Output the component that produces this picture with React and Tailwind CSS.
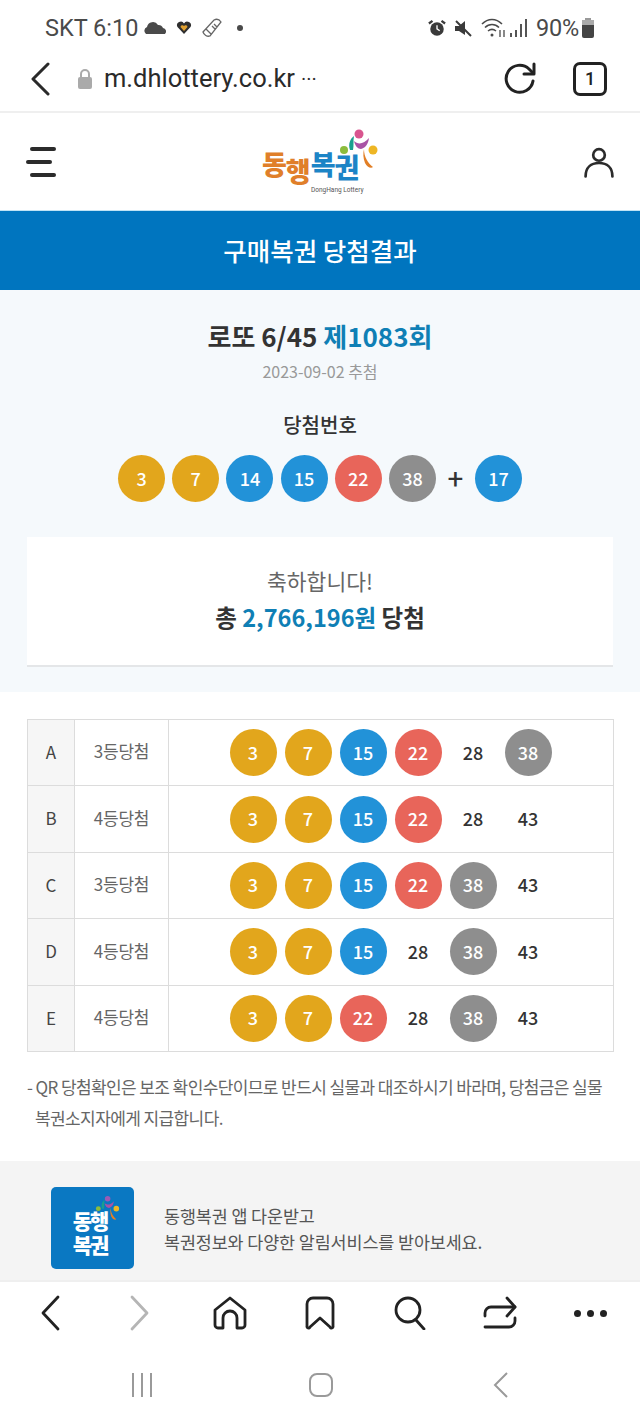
import React from 'react';

const YELLOW = 'bg-[#e2a61c]';
const BLUE = 'bg-[#2292d8]';
const RED = 'bg-[#e8655a]';
const GRAY = 'bg-[#8e8e8e]';

const ballColor = (n) => {
  if (n <= 10) return YELLOW;
  if (n <= 20) return BLUE;
  if (n <= 30) return RED;
  return GRAY;
};

const Ball = ({ n, on = true }) => (
  <span
    className={`flex h-[47px] w-[47px] shrink-0 items-center justify-center rounded-full pb-[1px] text-[18px] font-medium ${
      on ? `${ballColor(n)} text-white` : 'text-[#333]'
    }`}
  >
    {n}
  </span>
);

const rows = [
  { id: 'A', rank: '3등당첨', nums: [[3, 1], [7, 1], [15, 1], [22, 1], [28, 0], [38, 1]] },
  { id: 'B', rank: '4등당첨', nums: [[3, 1], [7, 1], [15, 1], [22, 1], [28, 0], [43, 0]] },
  { id: 'C', rank: '3등당첨', nums: [[3, 1], [7, 1], [15, 1], [22, 1], [38, 1], [43, 0]] },
  { id: 'D', rank: '4등당첨', nums: [[3, 1], [7, 1], [15, 1], [28, 0], [38, 1], [43, 0]] },
  { id: 'E', rank: '4등당첨', nums: [[3, 1], [7, 1], [22, 1], [28, 0], [38, 1], [43, 0]] },
];

const StatusBar = () => (
  <div className="flex h-[44px] items-end justify-between pl-[45px] pr-[45px] font-['Roboto',sans-serif] text-[23.500px] leading-[32px] text-[#4a4a4a]">
    <div className="flex items-center">
      <span>SKT 6:10</span>
      <svg width="24" height="18" viewBox="0 0 24 18" className="ml-[6px]">
        <path d="M2 15a4 4 0 0 1 1-7 6 6 0 0 1 11-2 5 5 0 0 1 5 3 3.500 3.500 0 0 1 2 6z" fill="#4a4a4a" />
      </svg>
      <svg width="16" height="16" viewBox="0 0 16 16" className="ml-[8px]">
        <path d="M8 14 1.500 7A3.500 3.500 0 0 1 8 3.500 3.500 3.500 0 0 1 14.500 7z" fill="#2f2f2f" />
        <path d="M8 11 4.500 7A2 2 0 0 1 8 6a2 2 0 0 1 3.500 1z" fill="#e0a030" />
      </svg>
      <svg width="22" height="22" viewBox="0 0 22 22" className="ml-[9px]" fill="none" stroke="#666" strokeWidth="1.300">
        <path d="M2 15 13 3c2-1 5-1 7 2L9 19c-3 1-6-1-7-4zM5 12l5 5M13 7l3 3M11 9l3 3" />
      </svg>
      <span className="ml-[14px] h-[6px] w-[6px] rounded-full bg-[#4a4a4a]" />
    </div>
    <div className="flex items-center">
      <svg width="18" height="20" viewBox="0 0 20 20">
        <circle cx="10" cy="11" r="7.500" fill="#3a3a3a" />
        <path d="M1 5l4-3M19 5l-4-3" stroke="#3a3a3a" strokeWidth="2.500" />
        <path d="M10 7v4l3 2" stroke="#fff" strokeWidth="1.500" fill="none" />
      </svg>
      <svg width="20" height="20" viewBox="0 0 20 20" className="ml-[7px]">
        <path d="M2 8h4l6-5v14l-6-4H2z" fill="#3a3a3a" />
        <path d="M3 3l15 15" stroke="#3a3a3a" strokeWidth="2" />
      </svg>
      <svg width="26" height="22" viewBox="0 0 26 22" className="ml-[8px]" fill="none" stroke="#4a4a4a" strokeWidth="1.600">
        <path d="M1 7c6-6 14-6 20 0M4 10.500c4-4 10-4 14 0M7 14c2.500-2 5.500-2 8 0" />
        <circle cx="11" cy="18" r="1.500" fill="#4a4a4a" stroke="none" />
        <path d="M19 13v7M23 13v7" strokeWidth="1.300" />
      </svg>
      <div className="ml-[3px] flex items-end gap-[3px]">
        <span className="h-[4px] w-[2px] bg-[#555]" />
        <span className="h-[7px] w-[2px] bg-[#555]" />
        <span className="h-[13px] w-[2px] bg-[#555]" />
        <span className="h-[18px] w-[2px] bg-[#555]" />
      </div>
      <span className="ml-[9px] tracking-[-0.2px]">90%</span>
      <svg width="14" height="20" viewBox="0 0 14 20" className="ml-[2px]">
        <path d="M4 0h6v2H4z" fill="#999" />
        <rect x="1" y="2" width="12" height="5" fill="#aaa" />
        <path d="M1 7h12v11a2 2 0 0 1-2 2H3a2 2 0 0 1-2-2z" fill="#444" />
      </svg>
    </div>
  </div>
);

const BrowserBar = () => (
  <div className="flex h-[69px] items-center border-b-2 border-[#efefef] pl-[30px] pr-[33px] pt-[2px]">
    <svg width="20" height="34" viewBox="0 0 20 34" fill="none" stroke="#2a2a2a" strokeWidth="3" strokeLinecap="round" strokeLinejoin="round">
      <path d="M18 2 3 17l15 15" />
    </svg>
    <svg width="16" height="22" viewBox="0 0 16 22" className="ml-[27px]">
      <path d="M4 9V6a4 4 0 0 1 8 0v3" fill="none" stroke="#aaa" strokeWidth="2" />
      <rect x="1" y="9" width="14" height="12" rx="2" fill="#aaa" />
    </svg>
    <span className="ml-[11px] font-['Roboto',sans-serif] text-[25.500px] leading-none text-[#2a2a2a]">m.dhlottery.co.kr</span>
    <span className="ml-[6px] font-['Roboto',sans-serif] text-[20px] leading-none text-[#2a2a2a]">···</span>
    <svg width="34" height="34" viewBox="0 0 34 34" className="ml-auto" fill="none" stroke="#222" strokeWidth="3" strokeLinecap="round" strokeLinejoin="round">
      <path d="M29 19a13.500 13.500 0 1 1-4-12l4 4" />
      <path d="M30 2v10H20" />
    </svg>
    <div className="ml-[35px] flex h-[34px] w-[34px] items-center justify-center rounded-[7px] border-[3px] border-[#222] font-['Roboto',sans-serif] text-[18px] font-medium text-[#222]">
      1
    </div>
  </div>
);

const LogoMark = ({ mono }) => (
  <svg width="44" height="46" viewBox="0 0 44 46">
    <circle cx="22" cy="6" r="4.500" fill={mono ? '#9a5bb5' : '#d8558f'} />
    <path d="M13 22c-2-6 0-11 4-14-1 5 0 9-1 14z" fill="#1aa08e" />
    <path d="M17 13c4 4 10 3 15-3-1 7-4 10-8 11-3 0-6-3-7-8z" fill="#a953a5" />
    <circle cx="7" cy="22" r="4" fill="#8cbc3c" />
    <circle cx="36" cy="22" r="4.500" fill="#eeb624" />
    <path d="M27 21c0 8 4 14 9 18-2 2-6 0-8-4-2-5-2-10-1-14z" fill="#e27f26" />
  </svg>
);

const Header = () => (
  <div className="flex h-[97px] items-center justify-between pl-[26px] pr-[24px]">
    <div className="flex flex-col gap-[9px]">
      <span className="ml-[4px] h-[4px] w-[26px] rounded-full bg-[#2b2b2b]" />
      <span className="h-[4px] w-[26px] rounded-full bg-[#2b2b2b]" />
      <span className="ml-[4px] h-[4px] w-[26px] rounded-full bg-[#2b2b2b]" />
    </div>
    <div className="relative h-[66px] w-[120px]">
      <div className="absolute left-[3px] top-[23px] flex font-['Noto_Sans_CJK_KR',sans-serif] text-[27px] font-black leading-[24px] tracking-[-1px]">
        <span className="text-[#e07f2a]">동</span>
        <span className="relative top-[7px] text-[#e07f2a]">행</span>
        <span className="ml-[1px] text-[#1c84c6]">복</span>
        <span className="relative top-[3px] text-[#1c84c6]">권</span>
      </div>
      <span className="absolute left-[52px] top-[57px] font-['Roboto',sans-serif] text-[6.500px] leading-[8px] text-[#555]">DongHang Lottery</span>
      <div className="absolute left-[78px] top-[-1px]">
        <LogoMark />
      </div>
    </div>
    <svg width="34" height="34" viewBox="0 0 34 38" fill="none" stroke="#2b2b2b" strokeWidth="3" strokeLinecap="round" className="mt-[2px]">
      <circle cx="17" cy="10" r="6.500" />
      <path d="M2 34c0-10 6-15 15-15s15 5 15 15" />
    </svg>
  </div>
);

const BottomNav = () => (
  <div className="h-[142px] border-t-2 border-[#efefef] bg-white">
    <div className="ml-[5px] grid h-[62px] w-[630px] grid-cols-7 place-items-center">
      <svg width="20" height="36" viewBox="0 0 20 36" fill="none" stroke="#222" strokeWidth="2.800" strokeLinecap="round" strokeLinejoin="round">
        <path d="M18 2 3 18l15 16" />
      </svg>
      <svg width="20" height="36" viewBox="0 0 20 36" fill="none" stroke="#b5b5b5" strokeWidth="2.800" strokeLinecap="round" strokeLinejoin="round">
        <path d="M2 2l15 16L2 34" />
      </svg>
      <svg width="34" height="34" viewBox="0 0 34 34" fill="none" stroke="#222" strokeWidth="2.800" strokeLinejoin="round">
        <path d="M2 14 17 2l15 12v15a3 3 0 0 1-3 3h-5V22a7 7 0 0 0-14 0v10H5a3 3 0 0 1-3-3z" />
      </svg>
      <svg width="30" height="34" viewBox="0 0 30 34" fill="none" stroke="#222" strokeWidth="2.800" strokeLinejoin="round">
        <path d="M2 8a6 6 0 0 1 6-6h14a6 6 0 0 1 6 6v22a1.500 1.500 0 0 1-3 1l-10-9-10 9a1.500 1.500 0 0 1-3-1z" />
      </svg>
      <svg width="32" height="34" viewBox="0 0 32 34" fill="none" stroke="#222" strokeWidth="2.800" strokeLinecap="round">
        <circle cx="14" cy="14" r="12" />
        <path d="M22 24l8 9" />
      </svg>
      <svg width="34" height="34" viewBox="0 0 34 34" fill="none" stroke="#222" strokeWidth="2.800" strokeLinecap="round" strokeLinejoin="round">
        <path d="M2 20v-3a6 6 0 0 1 6-6h24" />
        <path d="M24 2l8 9-8 9" />
        <path d="M32 22v3a6 6 0 0 1-6 6H2" />
      </svg>
      <div className="flex gap-[6px]">
        <span className="h-[7px] w-[7px] rounded-full bg-[#222]" />
        <span className="h-[7px] w-[7px] rounded-full bg-[#222]" />
        <span className="h-[7px] w-[7px] rounded-full bg-[#222]" />
      </div>
    </div>
    <div className="mt-[22px] flex h-[38px] items-center pl-[132px]">
      <div className="flex gap-[7px]">
        <span className="h-[24px] w-[2px] bg-[#9a9a9a]" />
        <span className="h-[24px] w-[2px] bg-[#9a9a9a]" />
        <span className="h-[24px] w-[2px] bg-[#9a9a9a]" />
      </div>
      <span className="ml-[157px] h-[24px] w-[24px] rounded-[8px] border-2 border-[#9a9a9a]" />
      <svg width="16" height="28" viewBox="0 0 16 28" fill="none" stroke="#9a9a9a" strokeWidth="2" className="ml-[160px]">
        <path d="M14 2 2 14l12 12" />
      </svg>
    </div>
  </div>
);

export default function App() {
  return (
    <div className="flex h-[1422px] w-[640px] flex-col overflow-hidden bg-white font-['Noto_Sans_CJK_KR',sans-serif]">
      <StatusBar />
      <BrowserBar />
      <div className="min-h-0 flex-1 overflow-hidden">
        <Header />
        <div className="flex h-[80px] items-center justify-center border-t border-[#bfe3f5] bg-[#0075bf] text-[25.500px] font-medium text-white">
          구매복권 당첨결과
        </div>

        {/* Draw summary */}
        <div className="h-[402px] bg-[#f5f9fc] px-[27px] pt-[27px]">
          <div className="text-center text-[26px] font-bold leading-[38px] text-[#333]">
            로또 6/45 <span className="text-[#0f7fb5]">제1083회</span>
          </div>
          <div className="mt-[4px] text-center text-[16px] leading-[24px] text-[#999]">2023-09-02 추첨</div>
          <div className="mt-[27px] text-center text-[20px] font-medium leading-[30px] text-[#333]">당첨번호</div>
          <div className="mt-[15px] flex items-center justify-center">
            <div className="flex gap-[7.200px]">
              {[3, 7, 14, 15, 22, 38].map((n) => (
                <Ball key={n} n={n} />
              ))}
            </div>
            <span className="mx-[9.500px] w-[20px] text-center font-['Roboto',sans-serif] text-[28px] leading-none text-[#333]">+</span>
            <Ball n={17} />
          </div>
          <div className="mt-[35px] flex h-[130px] flex-col items-center justify-center border-b-2 border-[#e4e6e8] bg-white pb-[4px]">
            <div className="text-[21.500px] leading-[36px] text-[#666]">축하합니다!</div>
            <div className="text-[23.500px] font-bold leading-[36px] text-[#333]">
              총 <span className="text-[#0f7fb5]">2,766,196원</span> 당첨
            </div>
          </div>
        </div>

        {/* Purchased games */}
        <div className="pl-[27px] pr-[26px] pt-[27px]">
          <div className="border-l border-t border-[#dcdcdc]">
            {rows.map((row) => (
              <div key={row.id} className="flex h-[66.400px] border-b border-r border-[#dcdcdc]">
                <div className="flex w-[47px] items-center justify-center border-r border-[#dcdcdc] bg-[#f6f6f6] pb-[2px] text-[17px] text-[#444]">{row.id}</div>
                <div className="flex w-[94px] items-center justify-center border-r border-[#dcdcdc] pb-[3px] text-[17px] tracking-[-0.2px] text-[#666]">{row.rank}</div>
                <div className="flex flex-1 items-center justify-center gap-[8px] pr-[1px]">
                  {row.nums.map(([n, on]) => (
                    <Ball key={n} n={n} on={!!on} />
                  ))}
                </div>
              </div>
            ))}
          </div>
          <p className="mt-[19px] pl-[8px] -indent-[8px] text-[17px] leading-[31px] tracking-[-0.6px] whitespace-nowrap text-[#666]">
            - QR 당첨확인은 보조 확인수단이므로 반드시 실물과 대조하시기 바라며, 당첨금은 실물<br />
            복권소지자에게 지급합니다.
          </p>
        </div>

        {/* App banner */}
        <div className="mt-[28px] flex h-[140px] items-start bg-[#f4f4f4] pl-[51px] pt-[26px]">
          <div className="relative h-[82px] w-[83px] rounded-[5px] bg-[#0a78c2]">
            <div className="absolute left-[17px] top-[21px] w-[44px] text-center text-[21px] font-black leading-[24px] tracking-[-2px] text-white">
              동행<br />복권
            </div>
            <div className="absolute left-[43px] top-[8px] scale-[0.62] origin-top-left">
              <LogoMark mono />
            </div>
          </div>
          <div className="ml-[30px] mt-[16px] text-[17.400px] leading-[26px] tracking-[-0.1px] text-[#555]">
            동행복권 앱 다운받고<br />복권정보와 다양한 알림서비스를 받아보세요.
          </div>
        </div>
      </div>
      <BottomNav />
    </div>
  );
}
